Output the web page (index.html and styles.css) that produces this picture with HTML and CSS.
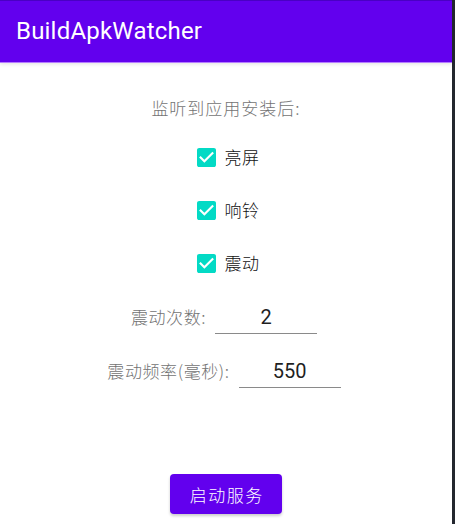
FILE: index.html
```html
<!DOCTYPE html>
<html lang="zh-CN">
<head>
<meta charset="utf-8">
<title>BuildApkWatcher</title>
<link rel="stylesheet" href="styles.css">
</head>
<body>
<div class="screen">
  <header class="appbar">
    <span class="appbar-title">BuildApkWatcher</span>
  </header>
  <main class="content">
    <div class="intro">监听到应用安装后:</div>

    <label class="check-row">
      <svg class="check-box" viewBox="3 3 18 18" width="19" height="19"><path fill="#03DAC5" d="M19 3H5c-1.11 0-2 .9-2 2v14c0 1.1.89 2 2 2h14c1.11 0 2-.9 2-2V5c0-1.1-.89-2-2-2z"/><path fill="#fff" d="M10 17l-5-5 1.41-1.41L10 14.17l7.590-7.59L19 8l-9 9z"/></svg>
      <span class="check-text">亮屏</span>
    </label>
    <label class="check-row">
      <svg class="check-box" viewBox="3 3 18 18" width="19" height="19"><path fill="#03DAC5" d="M19 3H5c-1.11 0-2 .9-2 2v14c0 1.1.89 2 2 2h14c1.11 0 2-.9 2-2V5c0-1.1-.89-2-2-2z"/><path fill="#fff" d="M10 17l-5-5 1.41-1.41L10 14.17l7.59-7.59L19 8l-9 9z"/></svg>
      <span class="check-text">响铃</span>
    </label>
    <label class="check-row">
      <svg class="check-box" viewBox="3 3 18 18" width="19" height="19"><path fill="#03DAC5" d="M19 3H5c-1.11 0-2 .9-2 2v14c0 1.1.89 2 2 2h14c1.11 0 2-.9 2-2V5c0-1.1-.89-2-2-2z"/><path fill="#fff" d="M10 17l-5-5 1.41-1.41L10 14.17l7.59-7.59L19 8l-9 9z"/></svg>
      <span class="check-text">震动</span>
    </label>

    <div class="field-row field-first">
      <span class="field-label">震动次数:</span>
      <div class="field-edit"><span class="field-value">2</span></div>
    </div>
    <div class="field-row field-second">
      <span class="field-label">震动频率(毫秒):</span>
      <div class="field-edit"><span class="field-value">550</span></div>
    </div>

    <button class="start-btn" type="button">启动服务</button>
  </main>
</div>
<div class="edge-strip"></div>
</body>
</html>
```
FILE: styles.css
```css
* { box-sizing: border-box; }

html, body {
  margin: 0;
  padding: 0;
  background: #ffffff;
}

body {
  width: 455px;
  height: 524px;
  overflow: hidden;
  display: flex;
  font-family: "Noto Sans CJK SC", "Noto Sans", sans-serif;
  font-weight: 300;
}

.screen {
  width: 452px;
  display: flex;
  flex-direction: column;
}

.edge-strip {
  width: 3px;
  height: 524px;
  background: #23272f;
}

.appbar {
  height: 63px;
  background: #6200ee;
  border-top: 1px solid #4a00c4;
  border-bottom: 1px solid #b57cff;
  box-shadow: 0 1px 4px rgba(0, 0, 0, 0.12);
  display: flex;
  align-items: center;
  padding: 0 0 2px 16px;
  position: relative;
  z-index: 1;
}

.appbar-title {
  font-family: Roboto, "Noto Sans", sans-serif;
  font-weight: 400;
  font-size: 24px;
  color: #ffffff;
  letter-spacing: 0.2px;
}

.content {
  display: flex;
  flex-direction: column;
  align-items: center;
}

.intro {
  margin-top: 33px;
  font-size: 17px;
  line-height: 24px;
  letter-spacing: 1px;
  color: #737373;
}

.check-row {
  height: 48px;
  display: flex;
  align-items: center;
  gap: 9px;
  padding-left: 4px;
  margin-top: 5px;
}

.check-row:first-of-type {
  margin-top: 13px;
}

.check-box {
  display: block;
}

.check-text {
  font-size: 17px;
  line-height: 24px;
  letter-spacing: 0.5px;
  color: #111111;
}

.field-row {
  display: flex;
  align-items: flex-start;
}

.field-first { margin-top: 18px; }
.field-second { margin-top: 25px; }

.field-label {
  font-size: 17px;
  line-height: 24px;
  letter-spacing: 0.6px;
  color: #737373;
  margin-right: 5px;
}

.field-edit {
  width: 110px;
  padding: 0 4px;
  display: flex;
  flex-direction: column;
}

.field-value {
  display: block;
  text-align: center;
  font-family: Roboto, "Noto Sans", sans-serif;
  font-weight: 400;
  font-size: 20px;
  line-height: 24px;
  color: #1f1f1f;
  padding-bottom: 4px;
  border-bottom: 1px solid #8a8a8a;
}

.start-btn {
  margin-top: 86px;
  width: 112px;
  height: 40px;
  border: none;
  border-radius: 4px;
  background: #6200ee;
  color: #ffffff;
  font-family: "Noto Sans CJK SC", sans-serif;
  font-weight: 300;
  font-size: 17px;
  letter-spacing: 1.5px;
  padding: 0 0 0 1.5px;
  box-shadow: 0 2px 3px rgba(0, 0, 0, 0.2);
}
```
